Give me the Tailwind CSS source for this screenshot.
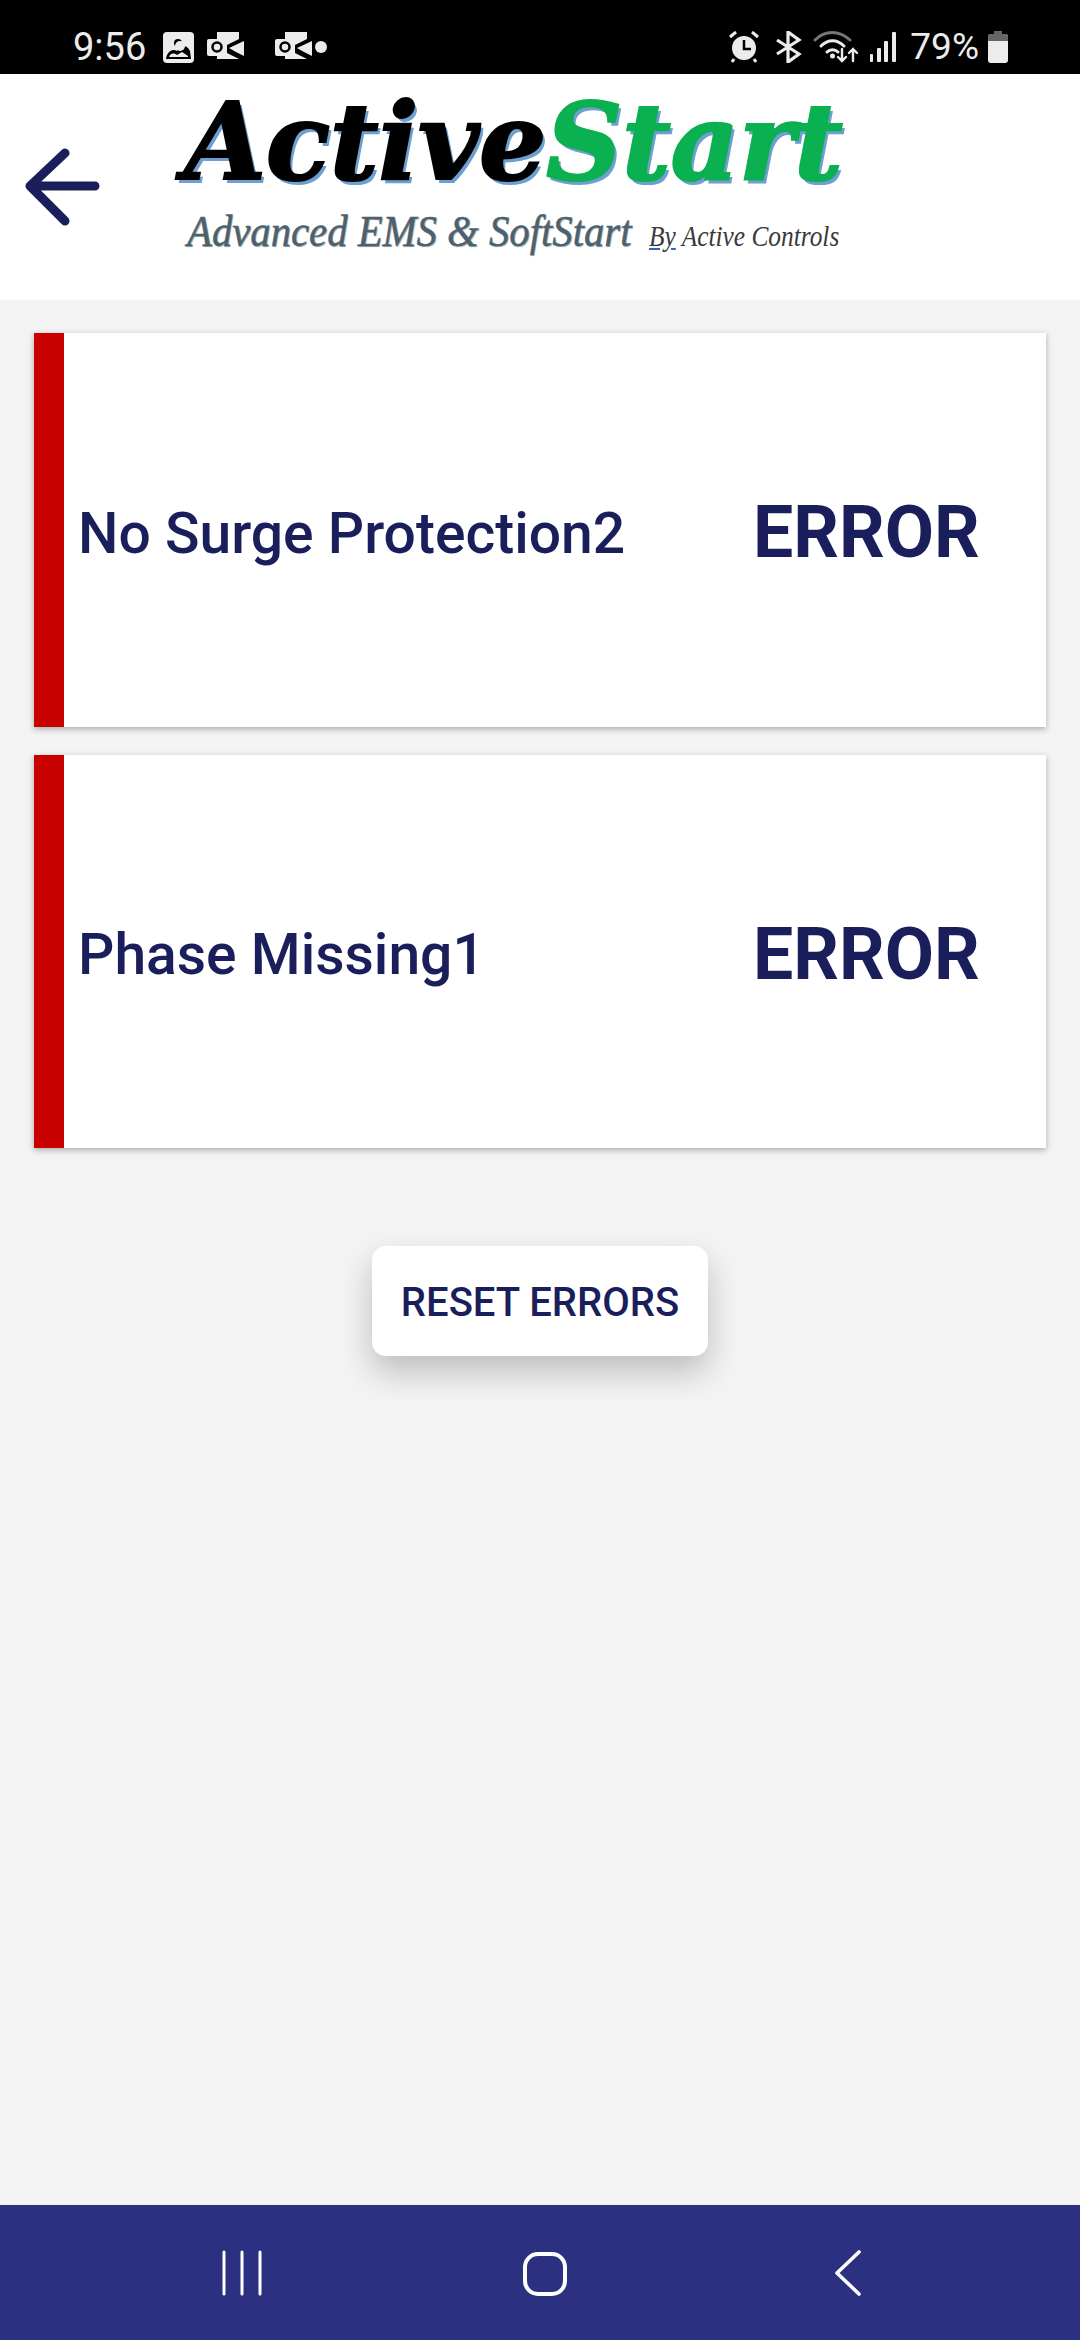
<!DOCTYPE html>
<html><head><meta charset="utf-8"><script src="https://cdn.jsdelivr.net/npm/@tailwindcss/browser@4"></script></head>
<body class="m-0">
<div class="w-[1080px] h-[2340px] flex flex-col bg-[#f3f3f3] overflow-hidden font-['Roboto',sans-serif] text-[#1a1f5c]">
  <!-- status bar -->
  <div class="h-[74px] bg-black flex items-end justify-between pb-[11px] pl-[73px] pr-[71px] text-[#ececec] shrink-0">
    <div class="flex items-center h-[32px]">
      <span class="text-[38px] leading-[32px] w-[90px]">9:56</span>
      <svg width="112" height="32" viewBox="0 0 112 32" fill="#ececec">
        <rect x="0" y="1" width="31" height="31" rx="4"/>
        <path d="M3 28 C4 21 9 17 14 20 C16 14 24 13 27 20 L28 28Z" fill="#000"/>
        <path d="M6 26 C7 23 10 21 14 24 L19 21 L25 25 L25 26Z" fill="#ececec"/>
        <circle cx="15" cy="12" r="4" fill="#000"/>
        <circle cx="17" cy="15" r="5" fill="#ececec"/>
        <path d="M54 1 H76 V8 L62 15 L54 11Z M66 17 L81 10 V25 L73 21Z M54 23 L60 20 L76 28 H54Z"/>
        <rect x="44" y="8" width="20" height="17" rx="2"/>
        <circle cx="54" cy="16" r="4.5" fill="none" stroke="#000" stroke-width="2.5"/>
      </svg>
      <svg class="ml-[-2px]" width="56" height="32" viewBox="0 0 56 32" fill="#ececec">
        <path d="M12 1 H34 V8 L20 15 L12 11Z M24 17 L39 10 V25 L31 21Z M12 23 L18 20 L34 28 H12Z"/>
        <rect x="2" y="8" width="20" height="17" rx="2"/>
        <circle cx="12" cy="16" r="4.5" fill="none" stroke="#000" stroke-width="2.5"/>
      </svg>
      <span class="w-[12px] h-[12px] rounded-full bg-[#ececec] ml-[-14px]"></span>
    </div>
    <div class="flex items-center h-[32px]">
      <svg width="30" height="32" viewBox="0 0 30 32" fill="#ececec">
        <circle cx="15" cy="17" r="12"/>
        <path d="M15 9 V18 H22" fill="none" stroke="#000" stroke-width="2.5"/>
        <path d="M1 6 L7 1 M29 6 L23 1 M5 28 L3 31 M25 28 L27 31" stroke="#ececec" stroke-width="3" fill="none"/>
      </svg>
      <svg class="ml-[15px]" width="28" height="32" viewBox="0 0 28 32" fill="none" stroke="#ececec" stroke-width="3.200">
        <path d="M3 9 L25 23 L14 31 V1 L25 9 L3 23"/>
      </svg>
      <svg class="ml-[11px]" width="46" height="32" viewBox="0 0 46 32" fill="none" stroke-linecap="round">
        <path d="M2 9 C12 -1 26 -1 37 9" stroke="#777" stroke-width="3"/>
        <path d="M8 15 C15 8 24 8 31 15" stroke="#ececec" stroke-width="3"/>
        <path d="M14 21 C17 18 22 18 25 21" stroke="#ececec" stroke-width="3"/>
        <circle cx="19.500" cy="25" r="2.500" fill="#ececec"/>
        <path d="M29 18 V30 M25 26 L29 30 L33 26 M40 30 V18 M36 22 L40 18 L44 22" stroke="#ececec" stroke-width="2.400"/>
      </svg>
      <svg class="ml-[10px]" width="28" height="32" viewBox="0 0 28 32" fill="#ececec">
        <rect x="1" y="23" width="3" height="8" rx="1"/><rect x="8" y="17" width="4" height="14" rx="1"/><rect x="15" y="10" width="4" height="21" rx="1"/><rect x="23" y="1" width="4" height="30" rx="1"/>
      </svg>
      <span class="ml-[13px] text-[37px] leading-[32px]">79%</span>
      <svg class="ml-[8px]" width="22" height="32" viewBox="0 0 22 32">
        <path d="M7 0 H15 V3 H18 Q21 3 21 6 V29 Q21 32 18 32 H4 Q1 32 1 29 V6 Q1 3 4 3 H7Z" fill="#ececec"/>
        <path d="M7 0 H15 V3 H18 Q21 3 21 6 V10 H1 V6 Q1 3 4 3 H7Z" fill="#666"/>
      </svg>
    </div>
  </div>
  <!-- header -->
  <div class="h-[226px] bg-white flex items-start shrink-0">
    <svg class="ml-[24px] mt-[74px]" width="76" height="78" viewBox="0 0 76 78" fill="none" stroke="#1a1f5c" stroke-width="9" stroke-linecap="round" stroke-linejoin="round">
      <path d="M71 38 H6 M41 5 L6 38 L41 73"/>
    </svg>
    <div class="ml-[84px] mt-[18px] flex flex-col w-[720px]">
      <div class="h-[100px] leading-[100px] text-[106px] font-bold italic font-['DejaVu_Serif',serif] whitespace-nowrap tracking-[-0.5px] [text-shadow:3px_4px_0_#6d9fd0] [-webkit-text-stroke:2px_currentColor]">
        <span class="text-black">Active</span><span class="text-[#0bb050]">Start</span>
      </div>
      <div class="mt-[14px] ml-[3px] flex items-baseline whitespace-nowrap font-['Liberation_Serif',serif] italic">
        <span class="shrink-0 origin-left scale-x-[.905] text-[45px] leading-[50px] text-[#4d6070] [text-shadow:1px_1px_1px_#8aa] [-webkit-text-stroke:0.4px_currentColor]">Advanced EMS &amp; SoftStart</span>
        <span class="shrink-0 ml-[-29px] origin-left scale-x-[.875] text-[29px] leading-[30px] text-[#3a3a3a]"><span class="underline decoration-[#3a5fc0]">By</span> Active Controls</span>
      </div>
    </div>
  </div>
  <!-- cards -->
  <div class="flex-1 flex flex-col items-center pt-[33px] px-[34px]">
    <div class="w-full flex flex-col gap-[28px]">
      <div class="h-[394px] bg-white flex items-center shadow-[0_2px_6px_rgba(0,0,0,0.3)] border-l-[30px] border-[#c80000]">
        <span class="ml-[14px] w-[675px] mt-[6px] text-[57px] font-medium leading-none">No Surge Protection2</span>
        <span class="mt-[6px] text-[71.5px] font-bold leading-none">ERROR</span>
      </div>
      <div class="h-[393px] bg-white flex items-center shadow-[0_2px_6px_rgba(0,0,0,0.3)] border-l-[30px] border-[#c80000]">
        <span class="ml-[14px] w-[675px] mt-[6px] text-[57px] font-medium leading-none">Phase Missing1</span>
        <span class="mt-[6px] text-[71.5px] font-bold leading-none">ERROR</span>
      </div>
    </div>
    <button class="mt-[98px] w-[336px] h-[110px] pt-[4px] bg-white rounded-[14px] text-[40px] font-medium shadow-[0_16px_32px_rgba(0,0,0,0.22)]">RESET ERRORS</button>
  </div>
  <!-- nav -->
  <div class="h-[135px] bg-[#2b3080] shrink-0 flex items-center">
    <svg class="ml-[222px]" width="44" height="46" viewBox="0 0 44 46" stroke="#fff" stroke-width="3" stroke-linecap="round"><path d="M2 2 V44 M20 2 V44 M38 2 V44"/></svg>
    <svg class="ml-[256px]" width="46" height="46" viewBox="0 0 46 46" fill="none" stroke="#fff" stroke-width="4"><rect x="3" y="4" width="40" height="40" rx="13"/></svg>
    <svg class="ml-[263px]" width="32" height="46" viewBox="0 0 32 46" fill="none" stroke="#fff" stroke-width="3.600" stroke-linecap="round" stroke-linejoin="round"><path d="M28 2 L6 23 L28 44"/></svg>
  </div>
</div>
</body></html>
